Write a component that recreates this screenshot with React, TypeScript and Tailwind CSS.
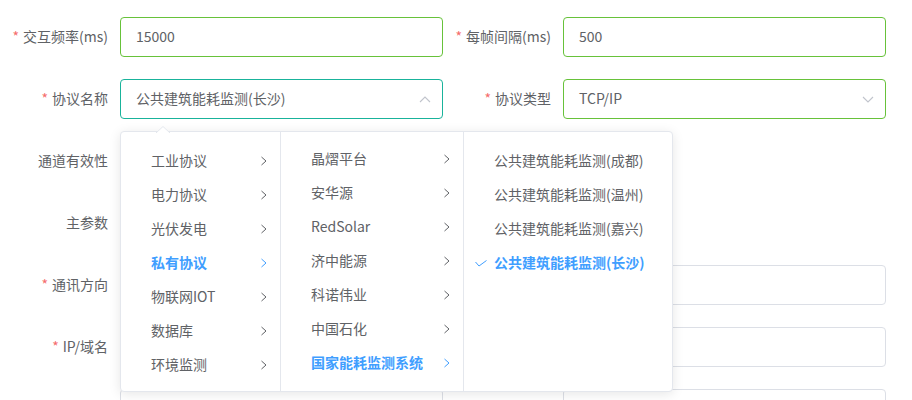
import React from "react";

const FONT = "font-['Noto_Sans_CJK_SC','Noto_Sans',sans-serif]";

function Label({ text, required }: { text: string; required?: boolean }) {
  return (
    <div className="w-[120px] shrink-0 pr-3 pb-[2px] h-10 flex items-center justify-end text-[14px] text-[#606266]">
      {required && <span className="text-[#f56c6c] mr-1">*</span>}
      <span>{text}</span>
    </div>
  );
}

function Chevron({ up }: { up?: boolean }) {
  return (
    <svg width="12" height="7" viewBox="0 0 12 7" className="absolute right-[11px] top-[16px]">
      <polyline
        points={up ? "1,6 6,1 11,6" : "1,1 6,6 11,1"}
        fill="none"
        stroke="#c0c4cc"
        strokeWidth="1.1"
      />
    </svg>
  );
}

function Field({
  value,
  border,
  arrow,
}: {
  value?: string;
  border: string;
  arrow?: "up" | "down";
}) {
  return (
    <div
      className={`relative flex-1 h-10 rounded-[4px] border ${border} bg-white flex items-center pl-[15px] pb-[2px] text-[14px] text-[#606266]`}
    >
      <span>{value}</span>
      {arrow && <Chevron up={arrow === "up"} />}
    </div>
  );
}

function Item({
  label,
  required,
  children,
}: {
  label: string;
  required?: boolean;
  children?: React.ReactNode;
}) {
  return (
    <div className="flex h-10">
      <Label text={label} required={required} />
      {children}
    </div>
  );
}

function RightArrow({ active }: { active?: boolean }) {
  return (
    <svg width="8" height="10" viewBox="0 0 8 10" className="absolute right-[12px] top-[12px]">
      <polyline
        points="1.5,1 6,5 1.5,9"
        fill="none"
        stroke={active ? "#409eff" : "#606266"}
        strokeWidth="1"
      />
    </svg>
  );
}

function Node({
  text,
  active,
  arrow = true,
  checked,
}: {
  text: string;
  active?: boolean;
  arrow?: boolean;
  checked?: boolean;
}) {
  return (
    <div
      className={`relative h-[34px] flex items-center pl-[30px] pb-[2px] text-[14px] whitespace-nowrap ${
        active ? "text-[#409eff] font-bold" : "text-[#606266]"
      }`}
    >
      {checked && (
        <svg width="12" height="7" viewBox="0 0 12 7" className="absolute left-[11px] top-[14px]">
          <polyline points="0.5,2 4,6 11.5,0.5" fill="none" stroke="#409eff" strokeWidth="1" />
        </svg>
      )}
      <span>{text}</span>
      {arrow && <RightArrow active={active} />}
    </div>
  );
}

export default function App() {
  const gray = "border-[#dcdfe6]";
  const green = "border-[#67c23a]";
  const teal = "border-[#19b39b]";
  return (
    <div className={`relative w-[912px] h-[400px] overflow-hidden bg-white ${FONT}`}>
      <div className="pt-[17px] w-[886px] grid grid-cols-2 gap-y-[22px]">
        <Item label="交互频率(ms)" required>
          <Field value="15000" border={green} />
        </Item>
        <Item label="每帧间隔(ms)" required>
          <Field value="500" border={green} />
        </Item>
        <Item label="协议名称" required>
          <Field value="公共建筑能耗监测(长沙)" border={teal} arrow="up" />
        </Item>
        <Item label="协议类型" required>
          <Field value="TCP/IP" border={green} arrow="down" />
        </Item>
        <Item label="通道有效性" />
        <div className="h-10" />
        <Item label="主参数" />
        <div className="h-10" />
        <Item label="通讯方向" required>
          <Field border={gray} />
        </Item>
        <Item label="端口" required>
          <Field border={gray} />
        </Item>
        <Item label="IP/域名" required>
          <Field border={gray} />
        </Item>
        <Item label="设备地址" required>
          <Field border={gray} />
        </Item>
        <div className="flex h-10">
          <div className="w-[120px] shrink-0" />
          <Field border={gray} />
        </div>
        <div className="flex h-10">
          <div className="w-[120px] shrink-0" />
          <Field border={gray} />
        </div>
      </div>

      {/* cascader dropdown */}
      <div className="absolute left-[120px] top-[131px] h-[261px] flex bg-white border border-[#e4e7ed] rounded-[4px] shadow-[0_2px_12px_0_rgba(0,0,0,0.1)]">
        <svg width="14" height="7" viewBox="0 0 14 7" className="absolute left-[35px] top-[-6px]">
          <polygon points="0,7 7,0 14,7" fill="#ffffff" />
          <polyline points="0,7 7,0.5 14,7" fill="none" stroke="#e4e7ed" strokeWidth="1" />
        </svg>
        <div className="w-[160px] border-r border-[#e4e7ed] pt-[12px]">
          <Node text="工业协议" />
          <Node text="电力协议" />
          <Node text="光伏发电" />
          <Node text="私有协议" active />
          <Node text="物联网IOT" />
          <Node text="数据库" />
          <Node text="环境监测" />
        </div>
        <div className="w-[183px] border-r border-[#e4e7ed] pt-[10px]">
          <Node text="晶熠平台" />
          <Node text="安华源" />
          <Node text="RedSolar" />
          <Node text="济中能源" />
          <Node text="科诺伟业" />
          <Node text="中国石化" />
          <Node text="国家能耗监测系统" active />
        </div>
        <div className="w-[208px] pt-[12px]">
          <Node text="公共建筑能耗监测(成都)" arrow={false} />
          <Node text="公共建筑能耗监测(温州)" arrow={false} />
          <Node text="公共建筑能耗监测(嘉兴)" arrow={false} />
          <Node text="公共建筑能耗监测(长沙)" arrow={false} active checked />
        </div>
      </div>
    </div>
  );
}
